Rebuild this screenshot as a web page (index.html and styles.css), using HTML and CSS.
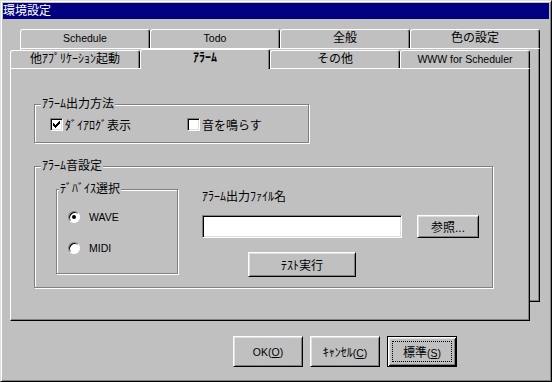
FILE: index.html
```html
<!DOCTYPE html>
<html lang="ja">
  <head>
    <meta charset="UTF-8" />
    <title>環境設定</title>
    <link rel="stylesheet" href="styles.css">
  </head>
  <body>
    <div class="window">
      <div class="titlebar">環境設定</div>
      <div class="tabs">
        <div class="sheet back">
          <div class="tabrow">
            <div class="tab"><span class="en">Schedule</span></div>
            <div class="tab"><span class="en">Todo</span></div>
            <div class="tab">全般</div>
            <div class="tab">色の設定</div>
          </div>
          <div class="panel"></div>
        </div>
        <div class="sheet front">
          <div class="tabrow">
            <div class="tab">他ｱﾌﾟﾘｹｰｼｮﾝ起動</div>
            <div class="tab selected">ｱﾗｰﾑ</div>
            <div class="tab">その他</div>
            <div class="tab"><span class="en">WWW for Scheduler</span></div>
          </div>
          <div class="panel">
            <fieldset class="group output">
              <legend>ｱﾗｰﾑ出力方法</legend>
              <div class="checks">
                <label class="check">
                  <span class="box">
                    <svg width="7" height="7" viewBox="0 0 7 7" shape-rendering="crispEdges">
                      <path d="M0 2h1v3h-1z M1 3h1v3h-1z M2 4h1v3h-1z M3 3h1v3h-1z M4 2h1v3h-1z M5 1h1v3h-1z M6 0h1v3h-1z" fill="#000" />
                    </svg>
                  </span>
                  ﾀﾞｲｱﾛｸﾞ表示
                </label>
                <label class="check"><span class="box"></span>音を鳴らす</label>
              </div>
            </fieldset>
            <fieldset class="group sound">
              <legend>ｱﾗｰﾑ音設定</legend>
              <div class="sound-body">
                <fieldset class="group device">
                  <legend>ﾃﾞﾊﾞｲｽ選択</legend>
                  <div class="radios">
                    <label class="radio"><span class="dot on"></span><span class="en">WAVE</span></label>
                    <label class="radio"><span class="dot"></span><span class="en">MIDI</span></label>
                  </div>
                </fieldset>
                <div class="file">
                  <div class="file-label">ｱﾗｰﾑ出力ﾌｧｲﾙ名</div>
                  <div class="file-row">
                    <div class="edit"></div>
                    <button class="btn browse">参照...</button>
                  </div>
                  <button class="btn test">ﾃｽﾄ実行</button>
                </div>
              </div>
            </fieldset>
          </div>
        </div>
      </div>
      <div class="actions">
        <button class="btn"><span class="en">OK(<u>O</u>)</span></button>
        <button class="btn">ｷｬﾝｾﾙ<span class="en">(<u>C</u>)</span></button>
        <button class="btn default">標準<span class="en">(<u>S</u>)</span></button>
      </div>
    </div>
  </body>
</html>
```

FILE: styles.css
```css
* {
  margin: 0;
  padding: 0;
  box-sizing: border-box;
}
body {
  background-color: #c0c0c0;
  font-family: "Liberation Sans", "Noto Sans CJK JP", sans-serif;
  font-size: 12px;
  color: #000;
}
.en {
  font-size: 10.5px;
}
.window {
  width: 552px;
  height: 382px;
  padding: 2px;
  border: 1px solid;
  border-color: #dfdfdf #000 #000 #dfdfdf;
  box-shadow: inset 1px 1px #fff, inset -1px -1px #808080;
  background-color: #c0c0c0;
}
.titlebar {
  height: 16px;
  line-height: 16px;
  background-color: #000080;
  color: #fff;
}

/* tab sheets */
.tabs {
  display: grid;
  width: 530px;
  margin: 10px 0 0 7px;
}
.sheet {
  grid-area: 1 / 1;
  width: 520px;
  align-self: start;
}
.back {
  margin-left: 10px;
}
.front {
  margin-top: 20px;
  z-index: 1;
}
.tabrow {
  display: flex;
  height: 19px;
  align-items: flex-end;
}
.tab {
  width: 130px;
  height: 19px;
  line-height: 17px;
  text-align: center;
  background-color: #c0c0c0;
  border-top: 1px solid #fff;
  border-left: 1px solid #fff;
  border-right: 1px solid #000;
  border-radius: 3px 3px 0 0;
  box-shadow: inset -1px 0 #808080;
}
.front .tab {
  height: 18px;
  line-height: 16px;
}
.front .tab.selected {
  height: 20px;
  margin-bottom: -1px;
  z-index: 2;
  font-weight: bold;
  line-height: 17px;
}
.panel {
  border: 1px solid;
  border-color: #fff #000 #000 #fff;
  box-shadow: inset -1px -1px #808080;
  background-color: #c0c0c0;
}
.back .panel {
  height: 254px;
}
.front .panel {
  height: 253px;
  padding: 28px 0 0 23px;
}

/* group boxes */
.group {
  min-width: 0;
  border: 1px solid #808080;
  box-shadow: 1px 1px #fff, inset 1px 1px #fff;
}
.group legend {
  line-height: 14px;
  padding: 0 1px;
  margin-left: 6px;
  background-color: #c0c0c0;
}
.output {
  width: 275px;
  height: 46px;
}
.checks {
  display: flex;
  margin: 6px 0 0 15px;
}
.check {
  display: flex;
  align-items: center;
  gap: 2px;
  height: 14px;
}
.check:first-child {
  width: 137px;
}
.box {
  width: 13px;
  height: 13px;
  display: flex;
  align-items: center;
  justify-content: center;
  background-color: #fff;
  border: 1px solid;
  border-color: #808080 #fff #fff #808080;
  box-shadow: inset 1px 1px #000, inset -1px -1px #dfdfdf;
}
.sound {
  width: 459px;
  height: 129px;
  margin-top: 16px;
}
.sound-body {
  display: flex;
  margin: 9px 0 0 21px;
}
.device {
  width: 122px;
  height: 92px;
}
.device legend {
  margin-left: 2px;
}
.radios {
  margin: 14px 0 0 11px;
}
.radio {
  display: flex;
  align-items: center;
  gap: 9px;
  height: 14px;
}
.radio + .radio {
  margin-top: 17px;
}
.dot {
  width: 12px;
  height: 12px;
  border-radius: 50%;
  display: flex;
  align-items: center;
  justify-content: center;
  background-color: #fff;
  border: 1px solid;
  border-color: #808080 #fff #fff #808080;
  box-shadow: inset 1px 1px #000;
}
.dot.on::after {
  content: "";
  width: 4px;
  height: 4px;
  border-radius: 50%;
  background-color: #000;
}
.file {
  margin: 8px 0 0 24px;
}
.file-label {
  line-height: 14px;
}
.file-row {
  display: flex;
  gap: 15px;
  margin-top: 11px;
}
.edit {
  width: 200px;
  height: 23px;
  background-color: #fff;
  border: 1px solid;
  border-color: #808080 #fff #fff #808080;
  box-shadow: inset 1px 1px #000, inset -1px -1px #dfdfdf;
}

/* buttons */
.btn {
  font-family: inherit;
  font-size: 12px;
  color: #000;
  background-color: #c0c0c0;
  border: 1px solid;
  border-color: #fff #000 #000 #fff;
  box-shadow: inset 1px 1px #dfdfdf, inset -1px -1px #808080;
}
.browse {
  width: 62px;
  height: 23px;
}
.test {
  display: block;
  width: 108px;
  height: 25px;
  margin: 14px 0 0 46px;
}
.actions {
  display: flex;
  gap: 7px;
  margin: 15px 0 0 230px;
}
.actions .btn {
  width: 70px;
  height: 31px;
}
.actions .btn.default {
  border-color: #000;
  box-shadow: inset 1px 1px #fff, inset -1px -1px #000, inset 2px 2px #dfdfdf, inset -2px -2px #808080;
  outline: 1px dotted #000;
  outline-offset: -6px;
}
```
